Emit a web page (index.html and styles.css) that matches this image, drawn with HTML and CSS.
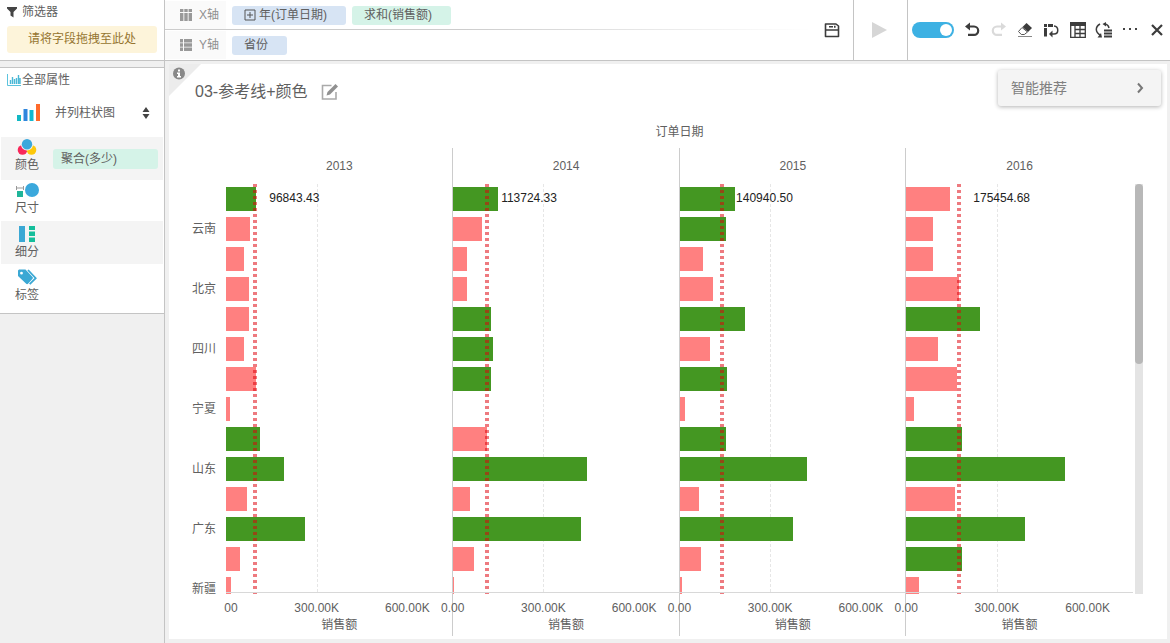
FILE: index.html
```html
<!DOCTYPE html>
<html lang="zh-CN">
<head>
<meta charset="utf-8">
<title>03-参考线+颜色</title>
<link rel="stylesheet" href="styles.css">
</head>
<body>
<div class="app">
  <aside class="sidebar">
    <section class="filter">
      <h2 class="side-title">
        <svg class="icon" width="12" height="12" viewBox="0 0 12 12"><path d="M1 1h10v1.500L7.500 6v5.500L4.500 9.500V6L1 2.500z" fill="#444"/></svg>
        筛选器
      </h2>
      <div class="dropzone">请将字段拖拽至此处</div>
    </section>
    <section class="props">
      <h2 class="side-title side-title-tight">
        <svg class="icon" width="14" height="12" viewBox="0 0 14 12"><path d="M.5 0v11.500H14" fill="none" stroke="#5cc3dd"/><path d="M3.500 10V6M5.500 10V3M7.500 10V5M9.500 10V4M11.500 10V1M13 10V4" stroke="#4bb8d6" stroke-width="1.400"/></svg>
        全部属性
      </h2>
      <button class="chart-type" type="button">
        <svg class="icon" width="24" height="18" viewBox="0 0 24 18"><path d="M0 11h4v6H0z" fill="#12b8c4"/><path d="M6.500 5h4v12h-4z" fill="#2f86dd"/><path d="M12.500 6h4v11h-4z" fill="#12b8d0"/><path d="M19 0h4v17h-4z" fill="#ff6a2b"/></svg>
        <span class="chart-type-name">并列柱状图</span>
        <svg class="icon" width="8" height="12" viewBox="0 0 8 12"><path d="M4 0l3.500 5h-7zM4 12l3.500-5h-7z" fill="#444"/></svg>
      </button>
      <div class="prop prop-shaded">
        <div class="prop-key">
          <svg class="icon" width="20" height="16" viewBox="0 0 20 16"><circle cx="5.500" cy="11" r="4.800" fill="#f8285a"/><circle cx="14.500" cy="11" r="4.800" fill="#fdc80c"/><circle cx="10" cy="5.500" r="6" fill="#f4f4f4"/><circle cx="10" cy="5.200" r="5.200" fill="#3ba8dc"/></svg>
          <span>颜色</span>
        </div>
        <span class="pill pill-green pill-wide">聚合(多少)</span>
      </div>
      <div class="prop">
        <div class="prop-key">
          <svg class="icon" width="24" height="16" viewBox="0 0 24 16"><path d="M1.500 4v4M8.500 4v4M1.500 6h7" stroke="#999" fill="none"/><path d="M2 9h6v6H2z" fill="#1fb59a"/><circle cx="17" cy="8" r="7" fill="#3ba8dc"/></svg>
          <span>尺寸</span>
        </div>
      </div>
      <div class="prop prop-shaded prop-low">
        <div class="prop-key">
          <svg class="icon" width="18" height="16" viewBox="0 0 18 16"><path d="M1 0h6v16H1z" fill="#3ba8d4"/><path d="M11 0h6v4h-6zM11 5.500h6v4.500h-6zM11 11.500h6V16h-6z" fill="#14be9b"/></svg>
          <span>细分</span>
        </div>
      </div>
      <div class="prop prop-low prop-last">
        <div class="prop-key">
          <svg class="icon" width="22" height="16" viewBox="0 0 22 16"><path fill="#3ba8d4" fill-rule="evenodd" d="M2 1.500L3 .5h6.500l7 7.500c.6.600.6 1.200 0 1.800l-4.500 5c-.6.600-1.200.600-1.800 0L2 7zM5.500 2.800a1.400 1.400 0 1 0 0 2.800 1.400 1.400 0 0 0 0-2.800z"/><path d="M12 1l7.700 8.200-6 6" fill="none" stroke="#3ba8d4" stroke-width="1.800"/></svg>
          <span>标签</span>
        </div>
      </div>
    </section>
  </aside>

  <div class="workspace">
    <header class="topbar">
      <div class="shelves">
        <div class="shelf">
          <div class="shelf-name">
            <svg class="icon" width="12" height="12" viewBox="0 0 12 12"><path d="M0 0h3.400v3H0zM4.300 0h3.400v3H4.300zM8.600 0H12v3H8.600zM0 4h3.400v8H0zM4.300 4h3.400v8H4.300zM8.600 4H12v8H8.600z" fill="#999"/></svg>
            X轴
          </div>
          <span class="pill pill-blue pill-date">
            <svg class="icon" width="12" height="12" viewBox="0 0 12 12"><path d="M1 1h10v10H1zM3 6h6M6 3v6" fill="none" stroke="#555"/></svg>
            年(订单日期)
          </span>
          <span class="pill pill-green">求和(销售额)</span>
        </div>
        <div class="shelf">
          <div class="shelf-name">
            <svg class="icon" width="12" height="12" viewBox="0 0 12 12"><path d="M0 0h3v3.400H0zM0 4.300h3v3.400H0zM0 8.600h3V12H0zM4 0h8v3.400H4zM4 4.300h8v3.400H4zM4 8.600h8V12H4z" fill="#999"/></svg>
            Y轴
          </div>
          <span class="pill pill-blue">省份</span>
        </div>
      </div>
      <div class="tool-group tool-save">
        <button type="button" aria-label="保存"><svg width="16" height="16" viewBox="0 0 16 16"><path d="M1.500 2h10.500l2.500 2v10.500h-13zM1.500 8h13M5 4.800h4M10.800 3.800v2" fill="none" stroke="#3c3c3c" stroke-width="1.600" stroke-linejoin="round"/></svg></button>
      </div>
      <div class="tool-group tool-run">
        <button type="button" aria-label="运行" disabled><svg width="16" height="16" viewBox="0 0 16 16"><path d="M0 0l15 8-15 8z" fill="#d6d6d6"/></svg></button>
      </div>
      <div class="tool-group tool-edit">
        <input class="toggle" type="checkbox" aria-label="自动刷新" checked>
        <div class="tools">
          <button type="button" aria-label="撤销"><svg width="16" height="16" viewBox="0 0 16 16"><path d="M4 4.500h6a4.200 4.200 0 0 1 0 8.400H4" fill="none" stroke="#3c3c3c" stroke-width="2.200"/><path d="M1 4.500l5-4v8z" fill="#3c3c3c"/></svg></button>
          <button type="button" aria-label="重做" disabled><svg width="16" height="16" viewBox="0 0 16 16"><path d="M12 4.500H6a4.200 4.200 0 0 0 0 8.400h5" fill="none" stroke="#dadada" stroke-width="2.200"/><path d="M15 4.500l-5-4v8z" fill="#dadada"/></svg></button>
          <button type="button" aria-label="清除"><svg width="16" height="16" viewBox="0 0 16 16"><path d="M9.500 1L15 6l-4 4-5.500-5z" fill="#3c3c3c"/><path d="M5 5.500L1.500 9.500l2.800 3h3L10.500 10z" fill="#fff" stroke="#555"/><path d="M1 14.500h14" stroke="#888"/></svg></button>
          <button type="button" aria-label="行列互换"><svg width="16" height="16" viewBox="0 0 16 16"><path d="M1 2h3v3H1zM5 2h5v3H5zM1 6h3v8.500H1z" fill="#3c3c3c"/><path d="M11 4c5 .5 5 8 0 8H8" fill="none" stroke="#3c3c3c" stroke-width="1.500"/><path d="M6 12l3.500-3.500v7z" fill="#3c3c3c"/></svg></button>
          <button type="button" aria-label="表格"><svg width="16" height="16" viewBox="0 0 16 16"><path d="M0 0h16v4H0z" fill="#3c3c3c"/><path d="M.7.700h14.600v14.600H.7zM5 4v11M10 4v11M5 7.500h10M5 11.500h10" fill="none" stroke="#3c3c3c" stroke-width="1.300"/></svg></button>
          <button type="button" aria-label="切换"><svg width="18" height="16" viewBox="0 0 18 16"><path d="M5 2C0 5 0 10 5.500 13.500M9 2c3 0 4.500 1.500 5 4" fill="none" stroke="#3c3c3c" stroke-width="1.500"/><path d="M7 15.500H2.500L6 11zM7.500 2L11 0v4.500zM9 7.500h8v2H9zM9 10.500h8v2H9zM9 13.500h8v2H9z" fill="#3c3c3c"/></svg></button>
          <button type="button" aria-label="更多"><svg width="16" height="16" viewBox="0 0 16 16"><path d="M1 6h2v2H1zM7 6h2v2H7zM13 6h2v2h-2z" fill="#444"/></svg></button>
          <button type="button" aria-label="关闭"><svg width="16" height="16" viewBox="0 0 16 16"><path d="M3 3l10 10M13 3L3 13" stroke="#3c3c3c" stroke-width="2.200"/></svg></button>
        </div>
      </div>
    </header>

    <main class="sheet">
      <div class="corner">
        <svg width="32" height="32" viewBox="0 0 32 32"><path d="M0 0h32L0 32z" fill="#ececec"/><circle cx="10" cy="9.500" r="6" fill="#888"/><path d="M9 5.500h2v2H9zM8 8.500h3v3.500h1v1.500H8V12h1v-2H8z" fill="#fff"/></svg>
      </div>
      <div class="sheet-head">
        <h1 class="sheet-title">03-参考线+颜色</h1>
        <button class="rename" type="button" aria-label="编辑标题"><svg width="18" height="16" viewBox="0 0 18 16"><path d="M10.500 1.500H1.500v13.500h13.500V8" fill="none" stroke="#aaa" stroke-width="1.600"/><path d="M14.500 0L17 2.500 9 10.500l-3.500 1 1-3.500z" fill="#909090"/></svg></button>
        <button class="recommend" type="button">智能推荐
          <svg width="8" height="12" viewBox="0 0 8 12"><path d="M2 1.500L6 6 2 10.500" fill="none" stroke="#777" stroke-width="2"/></svg>
        </button>
      </div>

      <div class="chart">
        <div class="cats">
          <span></span><span>云南</span><span></span><span>北京</span><span></span><span>四川</span><span></span><span>宁夏</span><span></span><span>山东</span><span></span><span>广东</span><span></span><span>新疆</span>
        </div>
        <div class="facets">
          <div class="facet-title">订单日期</div>
          <div class="facet">
            <div class="year">2013</div>
            <div class="plot">
              <div class="bar high" style="width:13.2%"></div><div class="bar" style="width:10.6%"></div><div class="bar" style="width:7.9%"></div><div class="bar" style="width:10.1%"></div><div class="bar" style="width:10.1%"></div><div class="bar" style="width:7.9%"></div><div class="bar" style="width:13.2%"></div><div class="bar" style="width:1.8%"></div><div class="bar high" style="width:15%"></div><div class="bar high" style="width:25.6%"></div><div class="bar" style="width:9.3%"></div><div class="bar high" style="width:34.8%"></div><div class="bar" style="width:6.2%"></div><div class="bar" style="width:2.2%"></div>
              <div class="ref" style="left:12.91%"><span>96843.43</span></div>
            </div>
            <div class="ticks ticks-first"><span>0.00</span><span>300.00K</span><span>600.00K</span></div>
            <div class="measure">销售额</div>
          </div>
          <div class="facet">
            <div class="year">2014</div>
            <div class="plot">
              <div class="bar high" style="width:19.9%"></div><div class="bar" style="width:13%"></div><div class="bar" style="width:6.2%"></div><div class="bar" style="width:6.2%"></div><div class="bar high" style="width:16.8%"></div><div class="bar high" style="width:17.7%"></div><div class="bar high" style="width:16.8%"></div><div class="bar" style="width:0"></div><div class="bar" style="width:15%"></div><div class="bar high" style="width:59.2%"></div><div class="bar" style="width:7.6%"></div><div class="bar high" style="width:56.5%"></div><div class="bar" style="width:9.3%"></div><div class="bar" style="width:.1%"></div>
              <div class="ref" style="left:15.16%"><span>113724.33</span></div>
            </div>
            <div class="ticks"><span>0.00</span><span>300.00K</span><span>600.00K</span></div>
            <div class="measure">销售额</div>
          </div>
          <div class="facet">
            <div class="year">2015</div>
            <div class="plot">
              <div class="bar high" style="width:24.5%"></div><div class="bar high" style="width:20.5%"></div><div class="bar" style="width:10.4%"></div><div class="bar" style="width:14.8%"></div><div class="bar high" style="width:28.9%"></div><div class="bar" style="width:13.5%"></div><div class="bar high" style="width:20.9%"></div><div class="bar" style="width:2.5%"></div><div class="bar high" style="width:20.5%"></div><div class="bar high" style="width:56.2%"></div><div class="bar" style="width:8.6%"></div><div class="bar high" style="width:50%"></div><div class="bar" style="width:9.5%"></div><div class="bar" style="width:1.1%"></div>
              <div class="ref" style="left:18.79%"><span>140940.50</span></div>
            </div>
            <div class="ticks"><span>0.00</span><span>300.00K</span><span>600.00K</span></div>
            <div class="measure">销售额</div>
          </div>
          <div class="facet">
            <div class="year">2016</div>
            <div class="plot">
              <div class="bar" style="width:19.3%"></div><div class="bar" style="width:11.8%"></div><div class="bar" style="width:11.8%"></div><div class="bar" style="width:23.4%"></div><div class="bar high" style="width:32.5%"></div><div class="bar" style="width:14.1%"></div><div class="bar" style="width:22.6%"></div><div class="bar" style="width:3.6%"></div><div class="bar high" style="width:24.6%"></div><div class="bar high" style="width:70%"></div><div class="bar" style="width:21.5%"></div><div class="bar high" style="width:52.4%"></div><div class="bar high" style="width:24.6%"></div><div class="bar" style="width:5.6%"></div>
              <div class="ref" style="left:23.39%"><span>175454.68</span></div>
            </div>
            <div class="ticks"><span>0.00</span><span>300.00K</span><span>600.00K</span></div>
            <div class="measure">销售额</div>
          </div>
        </div>
        <div class="scroll"><div class="scroll-thumb"></div></div>
      </div>
    </main>
  </div>
</div>
</body>
</html>
```
FILE: styles.css
```css
* { box-sizing: border-box; }

body {
  margin: 0;
  font: 12px/18px "Liberation Sans", Arial, "Noto Sans CJK SC", sans-serif;
  color: #606060;
  background: #f0f0f0;
}

h1, h2 { margin: 0; font-weight: normal; }

button {
  display: flex;
  align-items: center;
  justify-content: center;
  margin: 0;
  padding: 0;
  border: 0;
  background: none;
  font: inherit;
  color: inherit;
}

svg { display: block; flex: none; }

.app { display: flex; height: 100vh; min-height: 480px; }

/* sidebar */
.sidebar {
  flex: none;
  width: 165px;
  border-right: 1px solid #c4c4c4;
  display: flex;
  flex-direction: column;
  gap: 6px;
}

.filter {
  height: 61px;
  padding: 3px 7px 0 6px;
  background: #fff;
  border-bottom: 1px solid #c4c4c4;
}

.side-title {
  display: flex;
  align-items: center;
  gap: 4px;
  font-size: 12px;
  line-height: 18px;
}

.side-title-tight { gap: 1px; padding-left: 7px; }

.dropzone {
  margin: 5px 0 0 1px;
  border-radius: 3px;
  background: #fdf4da;
  color: #957430;
  line-height: 27px;
  text-align: center;
}

.props {
  padding-top: 3px;
  background: #fff;
  border-top: 1px solid #c4c4c4;
  border-bottom: 1px solid #c4c4c4;
}

.chart-type {
  width: 100%;
  height: 48px;
  padding: 0 14px 0 17px;
}

.chart-type-name { flex: 1; padding-left: 14px; text-align: left; }

.prop {
  display: flex;
  align-items: flex-start;
  height: 41px;
  margin: 0 1px;
  padding: 2px 5px 0 2px;
}

.prop-shaded { height: 43px; background: #f4f4f4; }
.prop-low { padding-top: 5px; }
.prop-last { height: 49px; }

.prop-key {
  width: 48px;
  display: flex;
  flex-direction: column;
  align-items: center;
  gap: 1px;
}

/* field pills */
.pill {
  display: flex;
  align-items: center;
  height: 19px;
  padding: 0 19px 0 12px;
  border-radius: 3px;
  white-space: nowrap;
}

.pill-blue { background: #d7e4f4; }
.pill-green { background: #d5f3e8; }
.pill-date { gap: 3px; }
.pill-wide { flex: 1; height: 20px; margin: 10px 0 0 2px; padding-left: 8px; }

/* top bar */
.workspace { flex: 1; min-width: 0; display: flex; flex-direction: column; }

.topbar {
  flex: none;
  display: flex;
  height: 61px;
  background: #fff;
  border-bottom: 1px solid #c4c4c4;
}

.shelves { flex: 1; min-width: 0; }

.shelf {
  display: flex;
  align-items: center;
  gap: 6px;
  height: 30px;
}

.shelf:first-child {
  background: linear-gradient(90deg, #ccc 45%, #fff) bottom / 100% 1px no-repeat;
}

.shelf-name {
  display: flex;
  align-items: center;
  gap: 7px;
  width: 61px;
  height: 28px;
  padding-left: 15px;
  background: #fafafa;
  color: #909090;
}

.tool-group { display: flex; align-items: center; }
.tool-save { padding: 0 13px; border-right: 1px solid #c4c4c4; }
.tool-run { width: 54px; padding-left: 18px; border-right: 1px solid #c4c4c4; }
.tool-edit { gap: 5px; padding: 0 0 0 4px; }

.toggle {
  appearance: none;
  width: 42px;
  height: 16px;
  margin: 0;
  padding: 2px;
  border-radius: 8px;
  background: #bbb;
  display: flex;
}

.toggle::before {
  content: "";
  width: 12px;
  height: 12px;
  border-radius: 50%;
  background: #fff;
}

.toggle:checked { background: #3db1e3; justify-content: flex-end; }

.tools { display: grid; grid-template-columns: repeat(8, 1fr); width: 211px; }

/* sheet */
.sheet {
  position: relative;
  flex: 1;
  min-height: 0;
  display: flex;
  flex-direction: column;
  margin: 3px 3px 4px 4px;
  padding-bottom: 3px;
  background: #fff;
}

.corner { position: absolute; top: 0; left: 0; }

.sheet-head {
  display: flex;
  align-items: center;
  gap: 14px;
  padding: 6px 6px 0 26px;
}

.sheet-title { margin-top: 8px; font-size: 16px; line-height: 24px; }

.rename { margin-top: 8px; }

.recommend {
  justify-content: space-between;
  width: 163px;
  height: 36px;
  margin-left: auto;
  padding: 0 17px 0 13px;
  border-radius: 3px;
  background: #f4f4f4;
  box-shadow: 0 1px 4px rgba(0, 0, 0, .3);
  font-size: 14px;
  color: #808080;
}

/* chart */
.chart { flex: 1; min-height: 0; display: flex; padding: 17px 24px 0 0; }

.cats {
  width: 57px;
  margin: 61px 0 42px;
  padding-right: 10px;
  text-align: right;
}

.cats span { display: block; height: 30px; line-height: 30px; }

.facets {
  flex: 1;
  min-width: 0;
  display: grid;
  grid-template-columns: repeat(4, 1fr);
  grid-template-rows: 25px minmax(0, 1fr);
}

.facet-title { grid-column: 1 / -1; text-align: center; }

.facet { display: flex; flex-direction: column; min-width: 0; }
.facet + .facet { box-shadow: -1px 0 #ccc; }

.year { line-height: 36px; text-align: center; }

.plot {
  position: relative;
  flex: 1;
  min-height: 0;
  overflow: hidden;
  padding-top: 3px;
}

.plot::before {
  content: "";
  position: absolute;
  top: 0;
  bottom: 2px;
  left: 40%;
  border-left: 1px dashed #e6e6e6;
}

.plot::after {
  content: "";
  position: absolute;
  left: 0;
  right: 0;
  bottom: 1px;
  height: 1px;
  background: #d8d8d8;
}

.bar { position: relative; height: 24px; margin-bottom: 6px; background: #ff8080; }
.high { background: #449722; }

.ref {
  position: absolute;
  top: 0;
  bottom: 0;
  width: 4px;
  margin-left: -2px;
  background: repeating-linear-gradient(rgba(222, 0, 10, .52) 0 3px, transparent 3px 6px);
}

.ref span { position: absolute; top: 5px; left: 16px; color: #222; }

.ticks {
  display: grid;
  grid-template-columns: 40% 40% 20%;
  padding-top: 6px;
  line-height: 16px;
}

.ticks-first { clip-path: inset(0 -30px 0 -2px); }

.ticks span {
  display: flex;
  justify-content: center;
  width: 0;
  white-space: nowrap;
}

.measure { padding-bottom: 2px; text-align: center; }

.scroll { width: 8px; margin: 61px 0 42px 2px; background: #e4e4e4; }

.scroll-thumb { height: 44%; border-radius: 4px; background: #b8b8b8; }
```
